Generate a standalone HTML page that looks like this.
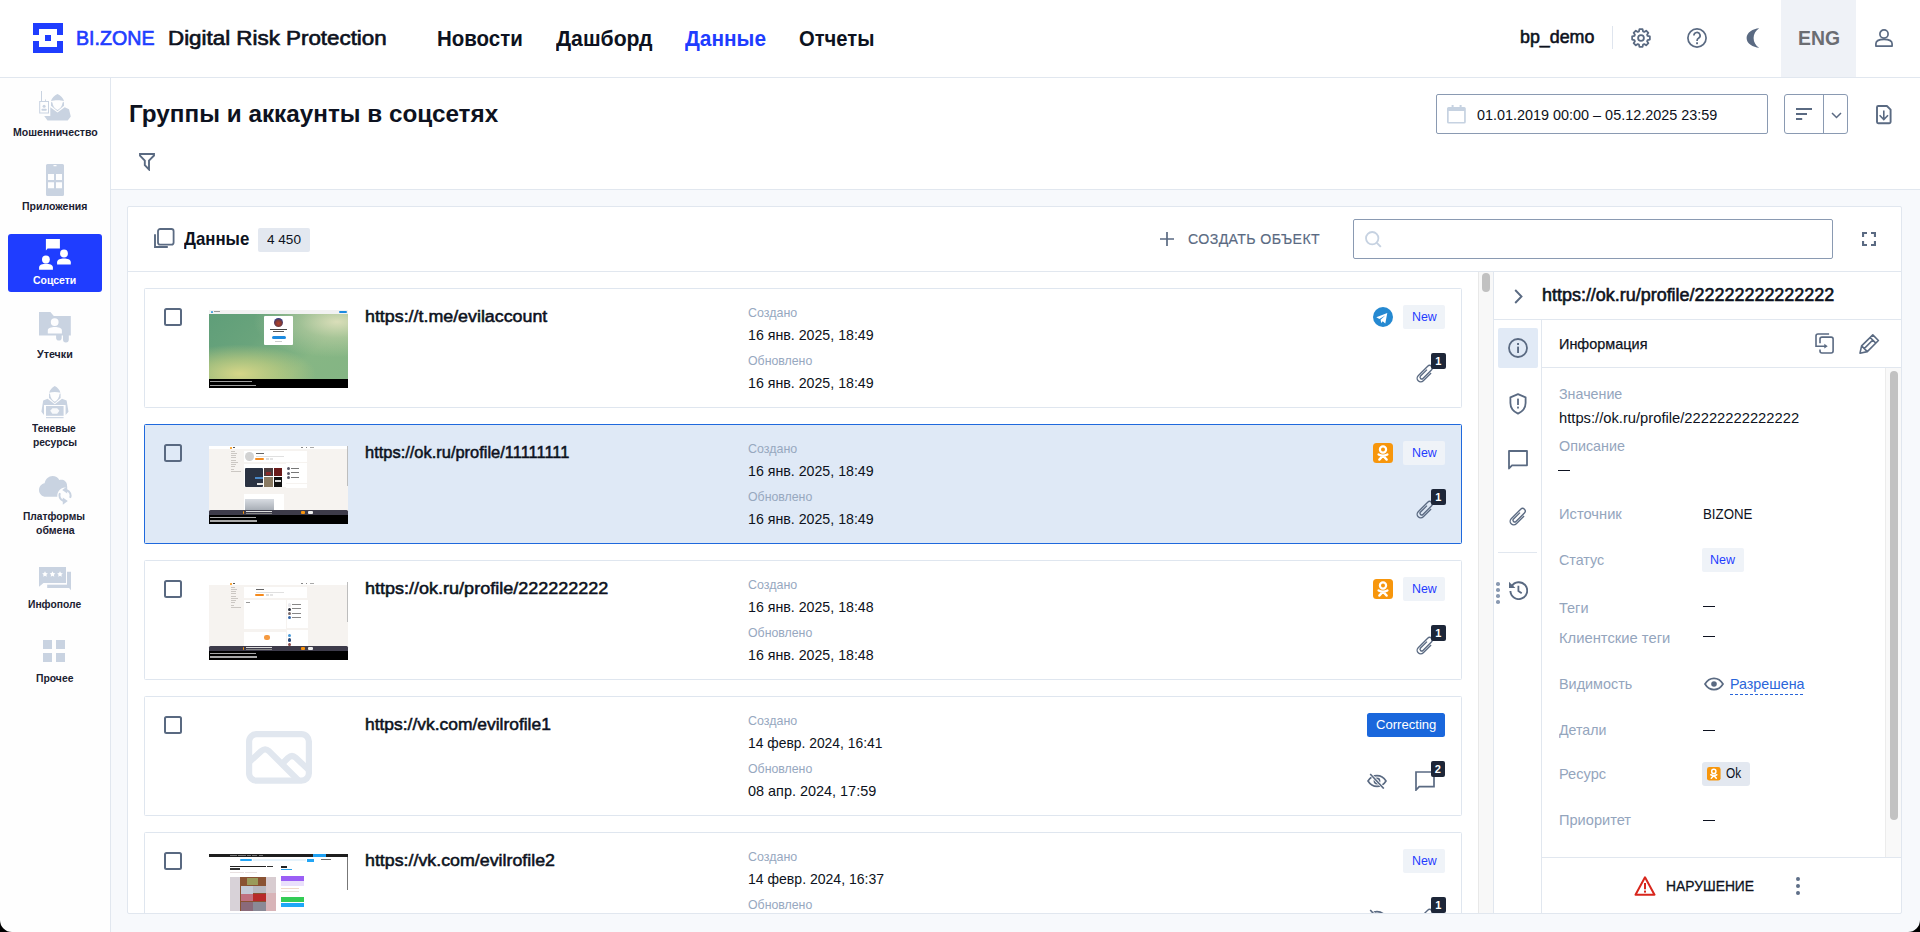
<!DOCTYPE html>
<html><head><meta charset="utf-8"><title>BI.ZONE DRP</title>
<style>
html,body{margin:0;padding:0;}
body{width:1920px;height:932px;overflow:hidden;position:relative;background:#fff;font-family:"Liberation Sans",sans-serif;}
.r{position:absolute;box-sizing:border-box;}
.t{position:absolute;white-space:nowrap;}
</style></head><body>
<div class="r" style="left:0px;top:0px;width:1920px;height:78px;background:#fff;border-bottom:1px solid #e1e7ef;"></div><svg class="r" style="left:33px;top:23px;" width="30" height="30" viewBox="0 0 30 30"><g fill="#1f3dff"><rect x="0" y="0" width="30" height="6"/><rect x="0" y="24" width="30" height="6"/><rect x="0" y="6" width="6" height="6"/><rect x="0" y="18" width="6" height="6"/><rect x="24" y="6" width="6" height="6"/><rect x="24" y="18" width="6" height="6"/><rect x="12" y="12" width="6" height="6"/></g></svg><div class="t" style="left:76.12px;top:27px;font-size:20.3px;line-height:22px;font-weight:400;color:#1f3dff;-webkit-text-stroke:0.65px #1f3dff;transform:scaleX(0.9674);transform-origin:0 0;">BI.ZONE</div><div class="t" style="left:167.92px;top:27px;font-size:19.9px;line-height:22px;font-weight:400;color:#0d1220;-webkit-text-stroke:0.64px #0d1220;transform:scaleX(1.1240);transform-origin:0 0;">Digital Risk Protection</div><div class="t" style="left:436.5px;top:26px;font-size:21.7px;line-height:25px;font-weight:700;color:#0d1220;transform:scaleX(0.9436);transform-origin:0 0;">Новости</div><div class="t" style="left:555.5px;top:26px;font-size:21.7px;line-height:25px;font-weight:700;color:#0d1220;transform:scaleX(0.9774);transform-origin:0 0;">Дашборд</div><div class="t" style="left:685.0px;top:26px;font-size:21.7px;line-height:25px;font-weight:700;color:#1f3dff;transform:scaleX(0.9608);transform-origin:0 0;">Данные</div><div class="t" style="left:799.0px;top:26px;font-size:21.7px;line-height:25px;font-weight:700;color:#0d1220;transform:scaleX(0.9315);transform-origin:0 0;">Отчеты</div><div class="t" style="left:1520.29px;top:27px;font-size:18.2px;line-height:20px;font-weight:400;color:#0d1220;-webkit-text-stroke:0.58px #0d1220;transform:scaleX(0.9806);transform-origin:0 0;">bp_demo</div><div class="r" style="left:1612px;top:26px;width:1px;height:23px;background:#dfe5ee;"></div><svg class="r" style="left:1631px;top:28px;" width="20" height="20" viewBox="0 0 20 20"><path fill="none" stroke="#5a6a82" stroke-width="1.8" stroke-linejoin="round" d="M7.98 3.40L8.44 1.14L11.56 1.14L12.02 3.40A6.9 6.9 0 0 1 13.24 3.91L15.16 2.63L17.37 4.84L16.09 6.76A6.9 6.9 0 0 1 16.60 7.98L18.86 8.44L18.86 11.56L16.60 12.02A6.9 6.9 0 0 1 16.09 13.24L17.37 15.16L15.16 17.37L13.24 16.09A6.9 6.9 0 0 1 12.02 16.60L11.56 18.86L8.44 18.86L7.98 16.60A6.9 6.9 0 0 1 6.76 16.09L4.84 17.37L2.63 15.16L3.91 13.24A6.9 6.9 0 0 1 3.40 12.02L1.14 11.56L1.14 8.44L3.40 7.98A6.9 6.9 0 0 1 3.91 6.76L2.63 4.84L4.84 2.63L6.76 3.91A6.9 6.9 0 0 1 7.98 3.40Z"/><circle cx="10" cy="10" r="2.9" fill="none" stroke="#5a6a82" stroke-width="1.8"/></svg><svg class="r" style="left:1687px;top:28px;" width="20" height="20" viewBox="0 0 20 20"><circle cx="10" cy="10" r="9.1" fill="none" stroke="#5a6a82" stroke-width="1.7"/><path d="M6.9 7.6a3.1 3.1 0 1 1 4.6 2.7c-.9.5-1.4 1.1-1.4 2.1v.6" fill="none" stroke="#5a6a82" stroke-width="1.7"/><rect x="9.1" y="14.3" width="1.9" height="1.9" fill="#5a6a82"/></svg><svg class="r" style="left:1746px;top:28px;" width="14" height="20" viewBox="0 0 14 20"><path fill="#5a6a82" d="M13.2 0.2C7 0.8 0.6 4.2 0.6 10s6.4 9.2 12.6 9.8C9.6 17.6 7.6 14 7.6 10S9.6 2.4 13.2 0.2z"/></svg><div class="r" style="left:1781px;top:0px;width:75px;height:77px;background:#eff2f7;"></div><div class="t" style="left:1797.6px;top:27px;font-size:19.9px;line-height:22px;font-weight:700;color:#6b6d72;transform:scaleX(0.9749);transform-origin:0 0;">ENG</div><svg class="r" style="left:1875px;top:29px;" width="18" height="18" viewBox="0 0 18 18"><circle cx="9" cy="5" r="4.1" fill="none" stroke="#5a6a82" stroke-width="1.7"/><path d="M0.9 17.1v-2.3c0-2.9 3.7-4.4 8.1-4.4s8.1 1.5 8.1 4.4v2.3z" fill="none" stroke="#5a6a82" stroke-width="1.7" stroke-linejoin="round"/></svg><div class="r" style="left:0px;top:78px;width:111px;height:854px;background:#fefefe;border-right:1px solid #e1e7ef;"></div><svg class="r" style="left:38px;top:90px;" width="34" height="32" viewBox="0 0 34 32"><g fill="#c9d3e1"><rect x="3" y="1" width="1" height="10.5"/><path d="M1.2 11h9.8v12.6H1.2z M2.2 12v10.6h7.8V12z" fill-rule="evenodd"/><circle cx="6.1" cy="16.3" r="1.5"/><rect x="3.4" y="18.8" width="5.4" height="2" rx="1"/><path d="M7.5 9.2c.6.4.8 1 .3 2.6l-.9.3c.4-1 .4-1.6-.1-2z"/><path d="M13 11.3C13.5 8 16.5 5.5 19.5 4C22.5 5.5 25.5 8 26 11.3C24 10.6 22 10.3 19.5 10.3C17 10.3 15 10.6 13 11.3z"/><path d="M13 12V15.8L19.5 21.2L26 15.8V12L24.6 12.4C24.2 16 22.2 18.6 19.5 20C16.8 18.6 14.8 16 14.4 12.4z"/><path d="M12.3 17.2L19.5 22.4L26.7 17.2L31 19.2L32.8 26.5L29.7 30.6H9.5L6.2 26H12.3z"/></g></svg><div class="t" style="left:12.8px;top:127px;font-size:10.2px;line-height:11px;font-weight:700;color:#1b2131;transform:scaleX(1.0353);transform-origin:0 0;">Мошенничество</div><svg class="r" style="left:46px;top:164.3px;" width="18" height="32" viewBox="0 0 18 32"><path fill="#c9d3e1" fill-rule="evenodd" d="M1.5 0h15a1.5 1.5 0 0 1 1.5 1.5v29a1.5 1.5 0 0 1-1.5 1.5h-15A1.5 1.5 0 0 1 0 30.5v-29A1.5 1.5 0 0 1 1.5 0zM2 10h6v6H2z M10 10h6v6h-6z M2 18.3h6v6H2z M10 18.3h6v6h-6z M7.5 1h3v1.2h-3z"/></svg><div class="t" style="left:22.1px;top:201px;font-size:10.2px;line-height:11px;font-weight:700;color:#1b2131;transform:scaleX(1.0324);transform-origin:0 0;">Приложения</div><div class="r" style="left:8px;top:234px;width:94px;height:58px;background:#1f3dff;border-radius:3px;"></div><svg class="r" style="left:39px;top:239px;" width="33" height="32" viewBox="0 0 33 32"><g fill="#fff"><path d="M6.9 0h14v9.6H8.6L6.9 11.4z"/><circle cx="25" cy="14.5" r="3.9"/><path d="M18.1 25.6v-2.4c0-2.5 3.6-3.6 6.9-3.6s6.8 1.1 6.8 3.6v2.4z"/><circle cx="6.9" cy="20.5" r="3.9"/><path d="M0.1 30.8v-2.4c0-2.5 3.6-3.6 6.9-3.6s6.9 1.1 6.9 3.6v2.4z"/></g></svg><div class="t" style="left:33.1px;top:275px;font-size:10.2px;line-height:11px;font-weight:700;color:#fff;transform:scaleX(1.0254);transform-origin:0 0;">Соцсети</div><svg class="r" style="left:39px;top:312.3px;" width="32" height="31" viewBox="0 0 32 31"><path fill="#c9d3e1" d="M0 0h11.4l3.4 3.9h17V23.4H0z"/><circle cx="15.7" cy="10.1" r="3.9" fill="#fdfdfe"/><path fill="#fdfdfe" d="M8.8 21.5h14.1v-3c0-2.4-3.6-3.4-7.05-3.4s-7.05 1-7.05 3.4z"/><path fill="#c9d3e1" d="M17.1 23h5.6v2.8a2.8 2.8 0 0 1-5.6 0z M24 23h5.8v4.6a2.9 2.9 0 0 1-5.8 0z"/></svg><div class="t" style="left:36.8px;top:349px;font-size:10.2px;line-height:11px;font-weight:700;color:#1b2131;transform:scaleX(1.0508);transform-origin:0 0;">Утечки</div><svg class="r" style="left:41px;top:386px;" width="29" height="33" viewBox="0 0 29 33"><g fill="#c9d3e1"><path d="M8.2 6.8C8.7 4 11 1.6 13.8 0C16.6 1.6 18.9 4 19.4 6.8C17.8 6.3 15.9 6 13.8 6C11.7 6 9.8 6.3 8.2 6.8z"/><path d="M8 7.4V12L13.8 17.2L19.6 12V7.4L18.6 7.7C18.2 11.4 16.4 14.4 13.8 15.8C11.2 14.4 9.4 11.4 9 7.7z"/><path d="M6.6 12.8L13.8 18.2L21 12.8L25.6 14.6L27.5 25.8L24.6 29V19.1H3V29L0.4 25.8L2.2 14.6z"/><rect x="5" y="20" width="17.6" height="9.8"/><rect x="5" y="31.1" width="17.6" height="1.1"/></g><path fill="#fdfdfe" d="M11.4 22.2h4.8l2.2 2.6-2.2 3h-4.8l-2.2-3z" opacity=".9"/></svg><div class="t" style="left:31.8px;top:423px;font-size:10.2px;line-height:11px;font-weight:700;color:#1b2131;transform:scaleX(0.9986);transform-origin:0 0;">Теневые</div><div class="t" style="left:33.1px;top:437px;font-size:10.2px;line-height:11px;font-weight:700;color:#1b2131;transform:scaleX(1.0091);transform-origin:0 0;">ресурсы</div><svg class="r" style="left:39px;top:476px;" width="34" height="31" viewBox="0 0 34 31"><path fill="#c9d3e1" d="M7 20.8C3 20.8 0 17.8 0 14C0 10.5 2.5 7.8 5.6 7.2C6.5 3 9.8 0 13.5 0C16.5 0 19 1.6 20.3 4C21 3.8 21.6 3.7 22.3 3.7C25.3 3.7 27.7 5.8 28 8.8L28 11.6A8.3 8.3 0 0 0 18.3 20.8Z"/><path fill="none" stroke="#c9d3e1" stroke-width="2" d="M27.92 14.24A5.6 5.6 0 0 1 31.08 21.87 M24.08 24.76A5.6 5.6 0 0 1 20.92 17.13"/><path fill="#c9d3e1" d="M23.2 13.9L28.2 10.2V17.6z M28.8 25.1L23.8 28.8V21.4z"/></svg><div class="t" style="left:22.7px;top:511px;font-size:10.2px;line-height:11px;font-weight:700;color:#1b2131;transform:scaleX(1.0022);transform-origin:0 0;">Платформы</div><div class="t" style="left:35.5px;top:525px;font-size:10.2px;line-height:11px;font-weight:700;color:#1b2131;transform:scaleX(1.0337);transform-origin:0 0;">обмена</div><svg class="r" style="left:39px;top:567px;" width="32" height="24" viewBox="0 0 32 24"><path fill="#c9d3e1" d="M8.2 4.7H32v18.6l-1.9-2.3H8.2z"/><path fill="#fdfdfe" d="M6.5 3.2h21.5v14.5H6.5z"/><path fill="#c9d3e1" d="M0 0h27v16.1H4.5L0 19.8z"/><g fill="#fff"><path d="M6 4.2l.9 1.9 2 .3-1.5 1.4.4 2-1.8-1-1.8 1 .4-2-1.5-1.4 2-.3z"/><path d="M13.5 4.2l.9 1.9 2 .3-1.5 1.4.4 2-1.8-1-1.8 1 .4-2-1.5-1.4 2-.3z"/><path d="M21 4.2l.9 1.9 2 .3-1.5 1.4.4 2-1.8-1-1.8 1 .4-2-1.5-1.4 2-.3z"/></g></svg><div class="t" style="left:28.4px;top:599px;font-size:10.2px;line-height:11px;font-weight:700;color:#1b2131;transform:scaleX(1.0098);transform-origin:0 0;">Инфополе</div><svg class="r" style="left:43.2px;top:640.2px;" width="22" height="22" viewBox="0 0 22 22"><g fill="#c9d3e1"><rect x="0" y="0" width="9" height="9"/><rect x="13" y="0" width="9" height="9"/><rect x="0" y="13" width="9" height="9"/><rect x="13" y="13" width="9" height="9"/></g></svg><div class="t" style="left:36.0px;top:673px;font-size:10.2px;line-height:11px;font-weight:700;color:#1b2131;transform:scaleX(1.0184);transform-origin:0 0;">Прочее</div><div class="r" style="left:111px;top:78px;width:1809px;height:112px;background:#fff;border-bottom:1px solid #e1e7ef;"></div><div class="t" style="left:128.9px;top:101px;font-size:23.5px;line-height:26px;font-weight:700;color:#0d1220;transform:scaleX(1.0336);transform-origin:0 0;">Группы и аккаунты в соцсетях</div><svg class="r" style="left:139px;top:153px;" width="16" height="18" viewBox="0 0 16 18"><path fill="none" stroke="#5a6a82" stroke-width="1.9" stroke-linejoin="miter" d="M1 1h14v1.5L10 7.6v8.9L5.8 12.2V7.6L1 2.7z"/></svg><div class="r" style="left:1436px;top:94px;width:332px;height:40px;border:1px solid #8a9ab2;border-radius:2px;background:#fff;"></div><svg class="r" style="left:1447px;top:105px;" width="19" height="19" viewBox="0 0 19 19"><g fill="#c6d2e1"><rect x="4.6" y="0" width="2" height="2.6"/><rect x="12.6" y="0" width="2" height="2.6"/><path fill-rule="evenodd" d="M1.6 2h15.6a1.6 1.6 0 0 1 1.6 1.6v13.4a1.6 1.6 0 0 1-1.6 1.6H1.6A1.6 1.6 0 0 1 0 17V3.6A1.6 1.6 0 0 1 1.6 2zM1.7 5.9v11h15.4v-11z"/></g></svg><div class="t" style="left:1477.0px;top:107px;font-size:14.2px;line-height:16px;font-weight:400;color:#0d1220;transform:scaleX(1.0150);transform-origin:0 0;">01.01.2019 00:00 – 05.12.2025 23:59</div><div class="r" style="left:1784px;top:94px;width:64px;height:40px;border:1px solid #8a9ab2;border-radius:3px;background:#fff;"></div><div class="r" style="left:1823px;top:95px;width:1px;height:38px;background:#8a9ab2;"></div><svg class="r" style="left:1796px;top:108px;" width="16" height="12" viewBox="0 0 16 12"><g fill="#5a6a82"><rect x="0" y="0" width="16" height="2"/><rect x="0" y="5" width="11" height="2"/><rect x="0" y="10" width="6.2" height="2"/></g></svg><svg class="r" style="left:1831px;top:112px;" width="11" height="7" viewBox="0 0 11 7"><path d="M1 1l4.5 4.5L10 1" fill="none" stroke="#5a6a82" stroke-width="1.5"/></svg><svg class="r" style="left:1876px;top:104.5px;" width="16" height="20" viewBox="0 0 16 20"><path d="M2.2 1h8.7l3.7 3.7V17a1.2 1.2 0 0 1-1.2 1.2H2.2A1.2 1.2 0 0 1 1 17V2.2A1.2 1.2 0 0 1 2.2 1z" fill="none" stroke="#5a6a82" stroke-width="1.9" stroke-linejoin="round"/><path d="M7.8 5.6v9 M3.6 10.2l4.2 4.3 4.2-4.3" fill="none" stroke="#5a6a82" stroke-width="1.6"/></svg><div class="r" style="left:111px;top:190px;width:1809px;height:742px;background:#f7f9fc;"></div><div class="r" style="left:127px;top:206px;width:1775px;height:708px;background:#fff;border:1px solid #e1e7ef;border-radius:2px;"></div><div class="r" style="left:128px;top:271px;width:1773px;height:1px;background:#e1e7ef;"></div><svg class="r" style="left:154px;top:228.2px;" width="21" height="21" viewBox="0 0 21 21"><rect x="4" y="1" width="15.6" height="15.6" rx="2.2" fill="none" stroke="#5a6a82" stroke-width="1.8"/><path d="M1 6.2V19H13.8" fill="none" stroke="#5a6a82" stroke-width="1.9"/></svg><div class="t" style="left:184.0px;top:229px;font-size:17.9px;line-height:20px;font-weight:700;color:#0d1220;transform:scaleX(0.9390);transform-origin:0 0;">Данные</div><div class="r" style="left:258px;top:228.3px;width:52px;height:23.4px;background:#e3e8f0;border-radius:2px;"></div><div class="t" style="left:267.0px;top:232px;font-size:13.4px;line-height:15px;font-weight:400;color:#0d1220;transform:scaleX(1.0129);transform-origin:0 0;">4 450</div><svg class="r" style="left:1160px;top:232px;" width="14" height="14" viewBox="0 0 14 14"><path d="M7 0v14 M0 7h14" stroke="#5a6a82" stroke-width="1.7"/></svg><div class="t" style="left:1188.0px;top:231px;font-size:14.2px;line-height:16px;font-weight:400;color:#5a6a82;letter-spacing:0.368px;-webkit-text-stroke:0.15px #5a6a82;">СОЗДАТЬ ОБЪЕКТ</div><div class="r" style="left:1353px;top:219px;width:480px;height:40px;border:1px solid #8a9ab2;border-radius:2px;background:#fff;"></div><svg class="r" style="left:1365px;top:231px;" width="17" height="17" viewBox="0 0 17 17"><circle cx="7.2" cy="7.2" r="6.2" fill="none" stroke="#c6d2e1" stroke-width="1.8"/><path d="M11.8 11.8l4 4" stroke="#c6d2e1" stroke-width="1.9"/></svg><svg class="r" style="left:1862px;top:232px;" width="14" height="14" viewBox="0 0 14 14"><path d="M1 5V1h4 M9 1h4v4 M13 9v4H9 M5 13H1V9" fill="none" stroke="#5a6a82" stroke-width="2.2"/></svg><div class="r" style="left:128px;top:272px;width:1350px;height:641px;overflow:hidden;"><div class="r" style="left:-128px;top:-272px;width:1920px;height:932px;"><div class="r" style="left:144px;top:288px;width:1318px;height:120px;background:#fff;border:1px solid #dfe6ef;border-radius:1.5px;"></div><div class="r" style="left:164px;top:308px;width:18px;height:18px;border:2px solid #596981;border-radius:2.5px;"></div><div class="r" style="left:209px;top:310px;width:139px;height:78px;background:#f2f2f2;overflow:hidden;"></div><div class="r" style="left:209px;top:314px;width:139px;height:65px;background:linear-gradient(135deg,#5f9e79 0%,#6aa47c 35%,#86b684 70%,#84b584 100%);"></div><div class="r" style="left:209px;top:314px;width:139px;height:65px;background:radial-gradient(ellipse 60% 55% at 92% 12%,rgba(222,224,188,0.95) 0%,rgba(200,212,170,0.5) 45%,rgba(200,210,170,0) 100%),radial-gradient(ellipse 55% 45% at 22% 92%,rgba(214,214,136,1) 0%,rgba(204,210,128,0.6) 50%,rgba(200,210,120,0) 100%);"></div><div class="r" style="left:264px;top:316px;width:29px;height:28.5px;background:#fff;border-radius:1px;"></div><div class="r" style="left:274px;top:318.2px;width:9px;height:9px;background:radial-gradient(circle at 50% 60%,#b8402a 0%,#7a3a3a 45%,#2a3a8a 75%);border-radius:50%;"></div><div class="r" style="left:270px;top:329.2px;width:17px;height:1.2px;background:#444;"></div><div class="r" style="left:273px;top:331px;width:11px;height:1.1px;background:#555;"></div><div class="r" style="left:272px;top:336px;width:13.5px;height:3px;background:#1d8be0;border-radius:2px;"></div><div class="r" style="left:275px;top:341px;width:7px;height:0.7px;background:#ccc;"></div><div class="r" style="left:209px;top:379px;width:139px;height:9px;background:#000;"></div><div class="r" style="left:210.2px;top:381px;width:42px;height:1.3px;background:#a0a0a0;"></div><div class="r" style="left:210.2px;top:384.8px;width:46px;height:1.3px;background:#a0a0a0;"></div><div class="r" style="left:338.5px;top:311px;width:8.5px;height:2px;background:#1d8be0;border-radius:1px;"></div><div class="r" style="left:210.5px;top:310.8px;width:2.5px;height:2.2px;background:#3a9ad8;border-radius:50%;"></div><div class="r" style="left:214px;top:311.4px;width:6px;height:1px;background:#999;"></div><div class="t" style="left:364.87px;top:307px;font-size:17px;line-height:19px;font-weight:400;color:#0d1220;-webkit-text-stroke:0.54px #0d1220;transform:scaleX(1.0485);transform-origin:0 0;">https://t.me/evilaccount</div><div class="t" style="left:747.9px;top:305px;font-size:13.1px;line-height:15px;font-weight:400;color:#97a8bf;transform:scaleX(0.9508);transform-origin:0 0;">Создано</div><div class="t" style="left:747.9px;top:327px;font-size:14.3px;line-height:16px;font-weight:400;color:#0d1220;transform:scaleX(0.9927);transform-origin:0 0;">16 янв. 2025, 18:49</div><div class="t" style="left:747.9px;top:353px;font-size:13.1px;line-height:15px;font-weight:400;color:#97a8bf;transform:scaleX(0.9412);transform-origin:0 0;">Обновлено</div><div class="t" style="left:747.9px;top:375px;font-size:14.3px;line-height:16px;font-weight:400;color:#0d1220;transform:scaleX(0.9927);transform-origin:0 0;">16 янв. 2025, 18:49</div><svg class="r" style="left:1373px;top:307px;" width="20" height="20" viewBox="0 0 20 20"><circle cx="10" cy="10" r="10" fill="#2589d1"/><path fill="#fff" d="M3.3 10.2l11-4.3-2 10.7-2.6-2.3-1.5 1.8-.6-3.3 4.6-4.3-5.8 3.6z"/></svg><div class="r" style="left:1403px;top:305px;width:42px;height:23.5px;background:#eff3f8;border-radius:2px;"></div><div class="t" style="left:1412.2px;top:309px;font-size:12.9px;line-height:15px;font-weight:400;color:#1f3cff;transform:scaleX(0.9588);transform-origin:0 0;">New</div><svg class="r" style="left:1412.5px;top:361.5px;" width="24" height="24" viewBox="0 0 24 24"><g transform="rotate(45 12 12)"><path fill="none" stroke="#5a6a82" stroke-width="1.35" d="M15.6 7V18a3.6 3.6 0 0 1-7.2 0V4.6a2.65 2.65 0 0 1 5.3 0V16.6a1.7 1.7 0 0 1-3.4 0V7.5"/></g></svg><div class="r" style="left:1431px;top:353px;width:14.5px;height:15.8px;background:#1d2638;border-radius:2px;"></div><div class="t" style="left:1431px;width:14.5px;text-align:center;top:355px;font-size:11px;line-height:12px;font-weight:700;color:#fff;">1</div><div class="r" style="left:144px;top:424px;width:1318px;height:120px;background:#dfe9f6;border:1px solid #1f69dd;border-radius:1.5px;"></div><div class="r" style="left:164px;top:444px;width:18px;height:18px;border:2px solid #596981;border-radius:2.5px;"></div><div class="r" style="left:209px;top:446px;width:139px;height:78px;background:#f6f3f0;overflow:hidden;"></div><div class="r" style="left:209px;top:446px;width:139px;height:3.2px;background:#fff;"></div><div class="r" style="left:230.3px;top:446.6px;width:2.2px;height:2.4px;background:#f7930e;border-radius:50%;"></div><div class="r" style="left:232.8px;top:447.2px;width:1.8px;height:1.2px;background:#555;"></div><div class="r" style="left:301px;top:447.2px;width:2px;height:1px;background:#888;"></div><div class="r" style="left:305.5px;top:447.2px;width:1.5px;height:1px;background:#888;"></div><div class="r" style="left:310px;top:447.2px;width:4px;height:1px;background:#aaa;"></div><div class="r" style="left:230.8px;top:451.3px;width:4.5px;height:0.8px;background:#cbc7c3;"></div><div class="r" style="left:230.8px;top:453.35px;width:6px;height:0.8px;background:#cbc7c3;"></div><div class="r" style="left:230.8px;top:455.4px;width:5px;height:0.8px;background:#cbc7c3;"></div><div class="r" style="left:230.8px;top:457.45px;width:5px;height:0.8px;background:#cbc7c3;"></div><div class="r" style="left:230.8px;top:459.5px;width:5px;height:0.8px;background:#cbc7c3;"></div><div class="r" style="left:230.8px;top:461.55px;width:7.5px;height:0.8px;background:#cbc7c3;"></div><div class="r" style="left:230.8px;top:463.6px;width:5.5px;height:0.8px;background:#cbc7c3;"></div><div class="r" style="left:230.8px;top:465.65px;width:4px;height:0.8px;background:#cbc7c3;"></div><div class="r" style="left:230.8px;top:468.9px;width:3.5px;height:0.8px;background:#cbc7c3;"></div><div class="r" style="left:230.8px;top:470.95px;width:10px;height:0.8px;background:#cbc7c3;"></div><div class="r" style="left:244.3px;top:451px;width:63px;height:11px;background:#fff;"></div><div class="r" style="left:245.2px;top:451.6px;width:9px;height:9.2px;background:#d2d2d2;border-radius:50%;"></div><div class="r" style="left:256px;top:453.3px;width:8px;height:1.1px;background:#666;"></div><div class="r" style="left:256px;top:455.6px;width:28px;height:1.2px;background:#e0e0e0;"></div><div class="r" style="left:255.1px;top:457.7px;width:9.1px;height:2.5px;background:#f58a1c;border-radius:1px;"></div><div class="r" style="left:265.5px;top:458.2px;width:3.2px;height:1.5px;background:#ddd;"></div><div class="r" style="left:270px;top:458.2px;width:2.5px;height:1.5px;background:#e5e5e5;"></div><div class="r" style="left:245.5px;top:465px;width:3px;height:0.9px;background:#bbb;"></div><div class="r" style="left:250.5px;top:465px;width:3px;height:0.9px;background:#bbb;"></div><div class="r" style="left:244.3px;top:463.5px;width:41.5px;height:23px;background:#fff;"></div><div class="r" style="left:245px;top:468px;width:18.4px;height:18.5px;background:#2a3242;border-radius:1px;"></div><div class="r" style="left:254.5px;top:476.5px;width:8px;height:2px;background:#4a88c8;"></div><div class="r" style="left:257px;top:482.5px;width:6px;height:2px;background:#e8e8e8;"></div><div class="r" style="left:264.3px;top:468px;width:8.4px;height:8px;background:#4a3a3c;"></div><div class="r" style="left:266px;top:472px;width:5px;height:3px;background:#8a2a2a;"></div><div class="r" style="left:264.3px;top:477px;width:8.4px;height:9.5px;background:#8a7a62;"></div><div class="r" style="left:273.7px;top:468px;width:8px;height:8px;background:#6a1a1a;"></div><div class="r" style="left:273.7px;top:477px;width:8px;height:9.5px;background:#111;"></div><div class="r" style="left:274.5px;top:480px;width:6.5px;height:2px;background:#ddd;"></div><div class="r" style="left:244.3px;top:494px;width:40px;height:15.8px;background:#fff;"></div><div class="r" style="left:245.2px;top:499.2px;width:28.8px;height:10.6px;background:linear-gradient(#d8dce2,#a8aeb6);"></div><div class="r" style="left:286px;top:463px;width:21.2px;height:19.8px;background:#fff;"></div><div class="r" style="left:286.8px;top:467.2px;width:3.2px;height:3.3px;background:#5a5a6a;border-radius:50%;"></div><div class="r" style="left:291.2px;top:467.8px;width:8px;height:1px;background:#777;"></div><div class="r" style="left:286.8px;top:471.7px;width:3.2px;height:3.3px;background:#5a5a6a;border-radius:50%;"></div><div class="r" style="left:291.2px;top:472.3px;width:8px;height:1px;background:#777;"></div><div class="r" style="left:286.8px;top:476.2px;width:3.2px;height:3.3px;background:#5a5a6a;border-radius:50%;"></div><div class="r" style="left:291.2px;top:476.8px;width:8px;height:1px;background:#777;"></div><div class="r" style="left:286px;top:484px;width:21.2px;height:3.5px;background:#fff;"></div><div class="r" style="left:209px;top:509.8px;width:139px;height:5.6px;background:#3d3b4a;border-radius:1.5px 1.5px 0 0;"></div><div class="r" style="left:242.6px;top:511px;width:1.6px;height:2.5px;background:#f7930e;border-radius:50%;"></div><div class="r" style="left:246px;top:511.2px;width:26px;height:0.9px;background:#ddd;"></div><div class="r" style="left:246px;top:512.8px;width:26px;height:0.7px;background:#888;"></div><div class="r" style="left:301.4px;top:511px;width:3.8px;height:2.5px;background:#f7930e;border-radius:1px;"></div><div class="r" style="left:307.5px;top:511px;width:5px;height:2.5px;background:#eee;border-radius:1px;"></div><div class="r" style="left:209px;top:515.2px;width:139px;height:8.8px;background:#000;"></div><div class="r" style="left:210.2px;top:516.6px;width:46px;height:1.4px;background:#a8a8a8;"></div><div class="r" style="left:210.2px;top:520.4px;width:47px;height:1.4px;background:#a8a8a8;"></div><div class="r" style="left:346.6px;top:446px;width:1.4px;height:40px;background:#bdbdbd;"></div><div class="t" style="left:364.87px;top:443px;font-size:17px;line-height:19px;font-weight:400;color:#0d1220;-webkit-text-stroke:0.54px #0d1220;transform:scaleX(0.9672);transform-origin:0 0;">https://ok.ru/profile/11111111</div><div class="t" style="left:747.9px;top:441px;font-size:13.1px;line-height:15px;font-weight:400;color:#97a8bf;transform:scaleX(0.9508);transform-origin:0 0;">Создано</div><div class="t" style="left:747.9px;top:463px;font-size:14.3px;line-height:16px;font-weight:400;color:#0d1220;transform:scaleX(0.9927);transform-origin:0 0;">16 янв. 2025, 18:49</div><div class="t" style="left:747.9px;top:489px;font-size:13.1px;line-height:15px;font-weight:400;color:#97a8bf;transform:scaleX(0.9412);transform-origin:0 0;">Обновлено</div><div class="t" style="left:747.9px;top:511px;font-size:14.3px;line-height:16px;font-weight:400;color:#0d1220;transform:scaleX(0.9927);transform-origin:0 0;">16 янв. 2025, 18:49</div><svg class="r" style="left:1373px;top:443px;" width="20" height="20" viewBox="0 0 20 20"><rect x="0" y="0" width="20" height="20" rx="3.5" fill="#f7960c"/><circle cx="10" cy="6.5" r="3.1" fill="none" stroke="#fff" stroke-width="2.2"/><path d="M5.6 11.4c2.8 1.6 6 1.6 8.8 0 M10 12.6l-3.7 4 M10 12.6l3.7 4" fill="none" stroke="#fff" stroke-width="2.3" stroke-linecap="round"/></svg><div class="r" style="left:1403px;top:441px;width:42px;height:23.5px;background:#eff3f8;border-radius:2px;"></div><div class="t" style="left:1412.2px;top:445px;font-size:12.9px;line-height:15px;font-weight:400;color:#1f3cff;transform:scaleX(0.9588);transform-origin:0 0;">New</div><svg class="r" style="left:1412.5px;top:497.5px;" width="24" height="24" viewBox="0 0 24 24"><g transform="rotate(45 12 12)"><path fill="none" stroke="#5a6a82" stroke-width="1.35" d="M15.6 7V18a3.6 3.6 0 0 1-7.2 0V4.6a2.65 2.65 0 0 1 5.3 0V16.6a1.7 1.7 0 0 1-3.4 0V7.5"/></g></svg><div class="r" style="left:1431px;top:489px;width:14.5px;height:15.8px;background:#1d2638;border-radius:2px;"></div><div class="t" style="left:1431px;width:14.5px;text-align:center;top:491px;font-size:11px;line-height:12px;font-weight:700;color:#fff;">1</div><div class="r" style="left:144px;top:560px;width:1318px;height:120px;background:#fff;border:1px solid #dfe6ef;border-radius:1.5px;"></div><div class="r" style="left:164px;top:580px;width:18px;height:18px;border:2px solid #596981;border-radius:2.5px;"></div><div class="r" style="left:209px;top:582px;width:139px;height:78px;background:#f6f3f0;overflow:hidden;"></div><div class="r" style="left:209px;top:582px;width:139px;height:3.2px;background:#fff;"></div><div class="r" style="left:230.3px;top:582.6px;width:2.2px;height:2.4px;background:#f7930e;border-radius:50%;"></div><div class="r" style="left:232.8px;top:583.2px;width:1.8px;height:1.2px;background:#555;"></div><div class="r" style="left:301px;top:583.2px;width:2px;height:1px;background:#888;"></div><div class="r" style="left:305.5px;top:583.2px;width:1.5px;height:1px;background:#888;"></div><div class="r" style="left:310px;top:583.2px;width:4px;height:1px;background:#aaa;"></div><div class="r" style="left:230.8px;top:587.3px;width:4.5px;height:0.8px;background:#cbc7c3;"></div><div class="r" style="left:230.8px;top:589.35px;width:6px;height:0.8px;background:#cbc7c3;"></div><div class="r" style="left:230.8px;top:591.4px;width:5px;height:0.8px;background:#cbc7c3;"></div><div class="r" style="left:230.8px;top:593.45px;width:5px;height:0.8px;background:#cbc7c3;"></div><div class="r" style="left:230.8px;top:595.5px;width:5px;height:0.8px;background:#cbc7c3;"></div><div class="r" style="left:230.8px;top:597.55px;width:7.5px;height:0.8px;background:#cbc7c3;"></div><div class="r" style="left:230.8px;top:599.6px;width:5.5px;height:0.8px;background:#cbc7c3;"></div><div class="r" style="left:230.8px;top:601.65px;width:4px;height:0.8px;background:#cbc7c3;"></div><div class="r" style="left:230.8px;top:604.9px;width:3.5px;height:0.8px;background:#cbc7c3;"></div><div class="r" style="left:230.8px;top:606.95px;width:10px;height:0.8px;background:#cbc7c3;"></div><div class="r" style="left:244.3px;top:587px;width:63px;height:11px;background:#fff;"></div><div class="r" style="left:256px;top:589.3px;width:8px;height:1.1px;background:#666;"></div><div class="r" style="left:256px;top:591.6px;width:28px;height:1.2px;background:#e0e0e0;"></div><div class="r" style="left:255.1px;top:593.7px;width:9.1px;height:2.5px;background:#f58a1c;border-radius:1px;"></div><div class="r" style="left:265.5px;top:594.2px;width:3.2px;height:1.5px;background:#ddd;"></div><div class="r" style="left:270px;top:594.2px;width:2.5px;height:1.5px;background:#e5e5e5;"></div><div class="r" style="left:245.5px;top:601px;width:3px;height:0.9px;background:#bbb;"></div><div class="r" style="left:250.5px;top:601px;width:3px;height:0.9px;background:#bbb;"></div><div class="r" style="left:244.3px;top:599.5px;width:42px;height:29px;background:#fff;"></div><div class="r" style="left:245.5px;top:601.5px;width:4px;height:0.9px;background:#999;"></div><div class="r" style="left:244.3px;top:632px;width:42px;height:14px;background:#fff;"></div><div class="r" style="left:264px;top:635px;width:5.5px;height:5px;background:#f59a40;border-radius:40%;"></div><div class="r" style="left:286.8px;top:599.5px;width:21px;height:28.5px;background:#fff;"></div><div class="r" style="left:287.5px;top:603.3px;width:3.2px;height:3.3px;background:#e8e8ec;border-radius:50%;"></div><div class="r" style="left:292px;top:604.0px;width:9px;height:1px;background:#888;"></div><div class="r" style="left:287.5px;top:607.5999999999999px;width:3.2px;height:3.3px;background:#2a2e3a;border-radius:50%;"></div><div class="r" style="left:292px;top:608.3px;width:9px;height:1px;background:#888;"></div><div class="r" style="left:287.5px;top:611.9px;width:3.2px;height:3.3px;background:#7a6a6a;border-radius:50%;"></div><div class="r" style="left:292px;top:612.6px;width:9px;height:1px;background:#888;"></div><div class="r" style="left:287.5px;top:616.1999999999999px;width:3.2px;height:3.3px;background:#3a6aaa;border-radius:50%;"></div><div class="r" style="left:292px;top:616.9px;width:9px;height:1px;background:#888;"></div><div class="r" style="left:286.8px;top:629.5px;width:21px;height:17px;background:#fff;"></div><div class="r" style="left:287.5px;top:634.0px;width:3.2px;height:3.3px;background:#4a9ad8;border-radius:50%;"></div><div class="r" style="left:287.5px;top:638.3px;width:3.2px;height:3.3px;background:#2a4a7a;border-radius:50%;"></div><div class="r" style="left:287.5px;top:642.6px;width:3.2px;height:3.3px;background:#8a4a4a;border-radius:50%;"></div><div class="r" style="left:209px;top:645.8px;width:139px;height:5.6px;background:#3d3b4a;border-radius:1.5px 1.5px 0 0;"></div><div class="r" style="left:242.6px;top:647px;width:1.6px;height:2.5px;background:#f7930e;border-radius:50%;"></div><div class="r" style="left:246px;top:647.2px;width:26px;height:0.9px;background:#ddd;"></div><div class="r" style="left:246px;top:648.8px;width:26px;height:0.7px;background:#888;"></div><div class="r" style="left:301.4px;top:647px;width:3.8px;height:2.5px;background:#f7930e;border-radius:1px;"></div><div class="r" style="left:307.5px;top:647px;width:5px;height:2.5px;background:#eee;border-radius:1px;"></div><div class="r" style="left:209px;top:651.2px;width:139px;height:8.8px;background:#000;"></div><div class="r" style="left:210.2px;top:652.6px;width:46px;height:1.4px;background:#a8a8a8;"></div><div class="r" style="left:210.2px;top:656.4px;width:47px;height:1.4px;background:#a8a8a8;"></div><div class="r" style="left:346.6px;top:582px;width:1.4px;height:40px;background:#bdbdbd;"></div><div class="t" style="left:364.87px;top:579px;font-size:17px;line-height:19px;font-weight:400;color:#0d1220;-webkit-text-stroke:0.54px #0d1220;transform:scaleX(1.0596);transform-origin:0 0;">https://ok.ru/profile/222222222</div><div class="t" style="left:747.9px;top:577px;font-size:13.1px;line-height:15px;font-weight:400;color:#97a8bf;transform:scaleX(0.9508);transform-origin:0 0;">Создано</div><div class="t" style="left:747.9px;top:599px;font-size:14.3px;line-height:16px;font-weight:400;color:#0d1220;transform:scaleX(0.9927);transform-origin:0 0;">16 янв. 2025, 18:48</div><div class="t" style="left:747.9px;top:625px;font-size:13.1px;line-height:15px;font-weight:400;color:#97a8bf;transform:scaleX(0.9412);transform-origin:0 0;">Обновлено</div><div class="t" style="left:747.9px;top:647px;font-size:14.3px;line-height:16px;font-weight:400;color:#0d1220;transform:scaleX(0.9927);transform-origin:0 0;">16 янв. 2025, 18:48</div><svg class="r" style="left:1373px;top:579px;" width="20" height="20" viewBox="0 0 20 20"><rect x="0" y="0" width="20" height="20" rx="3.5" fill="#f7960c"/><circle cx="10" cy="6.5" r="3.1" fill="none" stroke="#fff" stroke-width="2.2"/><path d="M5.6 11.4c2.8 1.6 6 1.6 8.8 0 M10 12.6l-3.7 4 M10 12.6l3.7 4" fill="none" stroke="#fff" stroke-width="2.3" stroke-linecap="round"/></svg><div class="r" style="left:1403px;top:577px;width:42px;height:23.5px;background:#eff3f8;border-radius:2px;"></div><div class="t" style="left:1412.2px;top:581px;font-size:12.9px;line-height:15px;font-weight:400;color:#1f3cff;transform:scaleX(0.9588);transform-origin:0 0;">New</div><svg class="r" style="left:1412.5px;top:633.5px;" width="24" height="24" viewBox="0 0 24 24"><g transform="rotate(45 12 12)"><path fill="none" stroke="#5a6a82" stroke-width="1.35" d="M15.6 7V18a3.6 3.6 0 0 1-7.2 0V4.6a2.65 2.65 0 0 1 5.3 0V16.6a1.7 1.7 0 0 1-3.4 0V7.5"/></g></svg><div class="r" style="left:1431px;top:625px;width:14.5px;height:15.8px;background:#1d2638;border-radius:2px;"></div><div class="t" style="left:1431px;width:14.5px;text-align:center;top:627px;font-size:11px;line-height:12px;font-weight:700;color:#fff;">1</div><div class="r" style="left:144px;top:696px;width:1318px;height:120px;background:#fff;border:1px solid #dfe6ef;border-radius:1.5px;"></div><div class="r" style="left:164px;top:716px;width:18px;height:18px;border:2px solid #596981;border-radius:2.5px;"></div><svg class="r" style="left:245.5px;top:730.5px;" width="66" height="53" viewBox="0 0 66 53"><defs><clipPath id="phc"><rect x="3.1" y="3.1" width="59.8" height="46.6" rx="6"/></clipPath></defs><g fill="none" stroke="#e1e7ef" stroke-width="6.2"><rect x="3.1" y="3.1" width="59.8" height="46.6" rx="7.5"/><g clip-path="url(#phc)"><g transform="translate(-1 2.5)"><path d="M1 31.5L16.2 17.6Q20.1 14.2 24 17.6L53 46.5" stroke-linejoin="round"/><path d="M35.2 32.2L43.2 24.3Q47 20.9 50.8 24.3L66 38.5" stroke-linejoin="round"/></g></g></g></svg><div class="t" style="left:364.87px;top:715px;font-size:17px;line-height:19px;font-weight:400;color:#0d1220;-webkit-text-stroke:0.54px #0d1220;transform:scaleX(1.0246);transform-origin:0 0;">https://vk.com/evilrofile1</div><div class="t" style="left:747.9px;top:713px;font-size:13.1px;line-height:15px;font-weight:400;color:#97a8bf;transform:scaleX(0.9508);transform-origin:0 0;">Создано</div><div class="t" style="left:747.9px;top:735px;font-size:14.3px;line-height:16px;font-weight:400;color:#0d1220;transform:scaleX(0.9701);transform-origin:0 0;">14 февр. 2024, 16:41</div><div class="t" style="left:747.9px;top:761px;font-size:13.1px;line-height:15px;font-weight:400;color:#97a8bf;transform:scaleX(0.9412);transform-origin:0 0;">Обновлено</div><div class="t" style="left:747.9px;top:783px;font-size:14.3px;line-height:16px;font-weight:400;color:#0d1220;transform:scaleX(1.0096);transform-origin:0 0;">08 апр. 2024, 17:59</div><div class="r" style="left:1367px;top:713px;width:78px;height:24px;background:#1a67dc;border-radius:2.5px;"></div><div class="t" style="left:1375.9px;top:717px;font-size:12.9px;line-height:15px;font-weight:400;color:#fff;transform:scaleX(1.0146);transform-origin:0 0;">Correcting</div><svg class="r" style="left:1367px;top:773px;" width="20" height="16" viewBox="0 0 20 16"><path d="M1 8c2.2-3.6 5.3-5.4 9-5.4s6.8 1.8 9 5.4c-2.2 3.6-5.3 5.4-9 5.4S3.2 11.6 1 8z" fill="none" stroke="#5a6a82" stroke-width="1.6"/><circle cx="10" cy="8" r="2.6" fill="none" stroke="#5a6a82" stroke-width="1.6"/><path d="M3.2 1l13.8 14.6" stroke="#fff" stroke-width="3"/><path d="M3.2 1l13.6 14.6" stroke="#5a6a82" stroke-width="1.6"/></svg><svg class="r" style="left:1415px;top:771px;" width="20" height="20" viewBox="0 0 20 20"><path d="M1 1h18v14.6H4.2L1 19z" fill="none" stroke="#5a6a82" stroke-width="1.7" stroke-linejoin="miter"/></svg><div class="r" style="left:1430.5px;top:761px;width:14.5px;height:15.8px;background:#1d2638;border-radius:2px;"></div><div class="t" style="left:1430.5px;width:14.5px;text-align:center;top:763px;font-size:11px;line-height:12px;font-weight:700;color:#fff;">2</div><div class="r" style="left:144px;top:832px;width:1318px;height:120px;background:#fff;border:1px solid #dfe6ef;border-radius:1.5px;"></div><div class="r" style="left:164px;top:852px;width:18px;height:18px;border:2px solid #596981;border-radius:2.5px;"></div><div class="r" style="left:209px;top:854px;width:139px;height:78px;background:#fff;overflow:hidden;"></div><div class="r" style="left:209px;top:854px;width:139px;height:3px;background:#1e1e1e;"></div><div class="r" style="left:230px;top:855.1px;width:7px;height:0.8px;background:#777;"></div><div class="r" style="left:238px;top:855.1px;width:8px;height:0.8px;background:#777;"></div><div class="r" style="left:247px;top:855.1px;width:4px;height:0.8px;background:#777;"></div><div class="r" style="left:252px;top:855.1px;width:5px;height:0.8px;background:#777;"></div><div class="r" style="left:259px;top:855.1px;width:4px;height:0.8px;background:#777;"></div><div class="r" style="left:313px;top:854.3px;width:13px;height:2.4px;background:#1fa1f2;"></div><div class="r" style="left:240px;top:858.8px;width:12px;height:2.6px;background:#22a5f5;border-radius:2px;"></div><div class="r" style="left:253px;top:859.4px;width:53px;height:1.4px;background:#e6f3fb;"></div><div class="r" style="left:306.5px;top:858.8px;width:7px;height:2.8px;background:#22a5f5;"></div><div class="r" style="left:230px;top:865.6px;width:36px;height:1.9px;background:#222;"></div><div class="r" style="left:230px;top:868px;width:10px;height:1.9px;background:#333;"></div><div class="r" style="left:267px;top:865.6px;width:6px;height:1.9px;background:#333;"></div><div class="r" style="left:280.5px;top:865.6px;width:6.5px;height:2.2px;background:#222;"></div><div class="r" style="left:281px;top:868.6px;width:11px;height:0.8px;background:#2aa0e8;"></div><div class="r" style="left:230px;top:871.6px;width:14px;height:1.4px;background:#e8e0e0;"></div><div class="r" style="left:245px;top:871.6px;width:12px;height:1.4px;background:#e8e0e0;"></div><div class="r" style="left:230px;top:877px;width:46px;height:34px;background:#d8d2d8;"></div><div class="r" style="left:240px;top:877px;width:26px;height:34px;background:#8a5232;"></div><div class="r" style="left:247px;top:878px;width:11px;height:7px;background:#9a9a5a;"></div><div class="r" style="left:240.5px;top:886px;width:12px;height:8px;background:#c4cad8;"></div><div class="r" style="left:253px;top:886px;width:12.5px;height:7px;background:#b8b8c0;"></div><div class="r" style="left:240.5px;top:894px;width:12px;height:7px;background:#c07080;"></div><div class="r" style="left:253px;top:894px;width:12.5px;height:7px;background:#b82a2a;"></div><div class="r" style="left:240.5px;top:902px;width:12px;height:8.5px;background:#8a6a7a;"></div><div class="r" style="left:253px;top:902px;width:12.5px;height:8.5px;background:#8a8a96;"></div><div class="r" style="left:266px;top:877px;width:10px;height:16px;background:#d8ccd0;"></div><div class="r" style="left:266px;top:893px;width:10px;height:18px;background:#d8b4b8;"></div><div class="r" style="left:280.5px;top:876px;width:23px;height:4.5px;background:#9b5ff5;"></div><div class="r" style="left:280.5px;top:881px;width:23px;height:4.6px;background:#eae0fc;"></div><div class="r" style="left:280.5px;top:887.5px;width:18px;height:0.8px;background:#f0d8c8;"></div><div class="r" style="left:280.5px;top:890.6px;width:18px;height:0.8px;background:#e8e0d8;"></div><div class="r" style="left:280.5px;top:897px;width:23px;height:4.8px;background:#33cc55;"></div><div class="r" style="left:280.5px;top:902.6px;width:23px;height:4.6px;background:#1ea7f7;"></div><div class="r" style="left:321px;top:858.8px;width:10px;height:1.2px;background:#666;"></div><div class="r" style="left:346.8px;top:857px;width:1.2px;height:33px;background:#777;"></div><div class="t" style="left:364.87px;top:851px;font-size:17px;line-height:19px;font-weight:400;color:#0d1220;-webkit-text-stroke:0.54px #0d1220;transform:scaleX(1.0472);transform-origin:0 0;">https://vk.com/evilrofile2</div><div class="t" style="left:747.9px;top:849px;font-size:13.1px;line-height:15px;font-weight:400;color:#97a8bf;transform:scaleX(0.9508);transform-origin:0 0;">Создано</div><div class="t" style="left:747.9px;top:871px;font-size:14.3px;line-height:16px;font-weight:400;color:#0d1220;transform:scaleX(0.9817);transform-origin:0 0;">14 февр. 2024, 16:37</div><div class="t" style="left:747.9px;top:897px;font-size:13.1px;line-height:15px;font-weight:400;color:#97a8bf;transform:scaleX(0.9412);transform-origin:0 0;">Обновлено</div><div class="r" style="left:1403px;top:849px;width:42px;height:23.5px;background:#eff3f8;border-radius:2px;"></div><div class="t" style="left:1412.2px;top:853px;font-size:12.9px;line-height:15px;font-weight:400;color:#1f3cff;transform:scaleX(0.9588);transform-origin:0 0;">New</div><svg class="r" style="left:1367px;top:909px;" width="20" height="16" viewBox="0 0 20 16"><path d="M1 8c2.2-3.6 5.3-5.4 9-5.4s6.8 1.8 9 5.4c-2.2 3.6-5.3 5.4-9 5.4S3.2 11.6 1 8z" fill="none" stroke="#5a6a82" stroke-width="1.6"/><circle cx="10" cy="8" r="2.6" fill="none" stroke="#5a6a82" stroke-width="1.6"/><path d="M3.2 1l13.8 14.6" stroke="#fff" stroke-width="3"/><path d="M3.2 1l13.6 14.6" stroke="#5a6a82" stroke-width="1.6"/></svg><svg class="r" style="left:1412.5px;top:905.5px;" width="24" height="24" viewBox="0 0 24 24"><g transform="rotate(45 12 12)"><path fill="none" stroke="#5a6a82" stroke-width="1.35" d="M15.6 7V18a3.6 3.6 0 0 1-7.2 0V4.6a2.65 2.65 0 0 1 5.3 0V16.6a1.7 1.7 0 0 1-3.4 0V7.5"/></g></svg><div class="r" style="left:1431px;top:897px;width:14.5px;height:15.8px;background:#1d2638;border-radius:2px;"></div><div class="t" style="left:1431px;width:14.5px;text-align:center;top:899px;font-size:11px;line-height:12px;font-weight:700;color:#fff;">1</div></div></div><div class="r" style="left:1478px;top:272px;width:15px;height:641px;background:#f8f8f8;border-left:1px solid #e8e8e8;"></div><div class="r" style="left:1482px;top:273px;width:8px;height:19px;background:#c1c1c1;border-radius:4px;"></div><div class="r" style="left:1493px;top:272px;width:1px;height:641px;background:#e1e7ef;"></div><div class="r" style="left:1494px;top:319px;width:407px;height:1px;background:#e1e7ef;"></div><svg class="r" style="left:1514px;top:289px;" width="9" height="15" viewBox="0 0 9 15"><path d="M1.2 1l6.3 6.5-6.3 6.5" fill="none" stroke="#5a6a82" stroke-width="1.9"/></svg><div class="t" style="left:1542.28px;top:285px;font-size:17.5px;line-height:20px;font-weight:400;color:#0d1220;-webkit-text-stroke:0.56px #0d1220;transform:scaleX(1.0251);transform-origin:0 0;">https://ok.ru/profile/22222222222222</div><div class="r" style="left:1541px;top:320px;width:1px;height:593px;background:#e1e7ef;"></div><div class="r" style="left:1498px;top:328px;width:40px;height:40px;background:#e1eaf6;border-radius:2px;"></div><svg class="r" style="left:1508px;top:338px;" width="20" height="20" viewBox="0 0 20 20"><circle cx="10" cy="10" r="9" fill="none" stroke="#5a6a82" stroke-width="1.8"/><rect x="9.1" y="8.6" width="1.9" height="6.4" fill="#5a6a82"/><rect x="9.1" y="5" width="1.9" height="2" fill="#5a6a82"/></svg><svg class="r" style="left:1509px;top:393px;" width="18" height="22" viewBox="0 0 18 22"><path d="M9 1.1l7.6 3.2v5.6c0 5-3.6 8.8-7.6 10.7C5 18.7 1.4 14.9 1.4 9.9V4.3z" fill="none" stroke="#5a6a82" stroke-width="1.8" stroke-linejoin="round"/><rect x="8.1" y="5.6" width="1.8" height="6.4" fill="#5a6a82"/><rect x="8.1" y="13.6" width="1.8" height="1.9" fill="#5a6a82"/></svg><svg class="r" style="left:1508.3px;top:450.2px;" width="20" height="20" viewBox="0 0 20 20"><path d="M1 1h18v14.3H4L1 18.5z" fill="none" stroke="#5a6a82" stroke-width="1.8" stroke-linejoin="round"/></svg><svg class="r" style="left:1506px;top:504.5px;" width="24" height="24" viewBox="0 0 24 24"><g transform="rotate(45 12 12)"><path fill="none" stroke="#5a6a82" stroke-width="1.35" d="M15.6 7V18a3.6 3.6 0 0 1-7.2 0V4.6a2.65 2.65 0 0 1 5.3 0V16.6a1.7 1.7 0 0 1-3.4 0V7.5"/></g></svg><div class="r" style="left:1498px;top:552px;width:39px;height:1px;background:#e1e7ef;"></div><svg class="r" style="left:1508px;top:580px;" width="20" height="20" viewBox="0 0 20 20"><path d="M3.6 6.3A8.4 8.4 0 1 1 2.4 11" fill="none" stroke="#5a6a82" stroke-width="1.9"/><path d="M1 1.7v6.4h6.4z" fill="#5a6a82"/><path d="M10.4 5.8v5.2l3.3 2.3" fill="none" stroke="#5a6a82" stroke-width="1.8"/></svg><div class="r" style="left:1496.2px;top:582.1px;width:3.6px;height:3.6px;background:#8a9ab2;border-radius:50%;"></div><div class="r" style="left:1496.2px;top:588.1px;width:3.6px;height:3.6px;background:#8a9ab2;border-radius:50%;"></div><div class="r" style="left:1496.2px;top:594.1px;width:3.6px;height:3.6px;background:#8a9ab2;border-radius:50%;"></div><div class="r" style="left:1496.2px;top:600.1px;width:3.6px;height:3.6px;background:#8a9ab2;border-radius:50%;"></div><div class="r" style="left:1542px;top:367px;width:359px;height:1px;background:#e1e7ef;"></div><div class="t" style="left:1558.7px;top:336px;font-size:14.8px;line-height:16px;font-weight:400;color:#0d1220;-webkit-text-stroke:0.25px #0d1220;transform:scaleX(0.9763);transform-origin:0 0;">Информация</div><svg class="r" style="left:1815px;top:333px;" width="20" height="22" viewBox="0 0 20 22"><path d="M14.1 1H3a2 2 0 0 0-2 2V13.2h10" fill="none" stroke="#5a6a82" stroke-width="1.6"/><path d="M9.3 10.8l3.4 2.4-3.4 2.4z" fill="#5a6a82"/><path d="M5 10.3V6.1a2 2 0 0 1 2-2h9.1a2 2 0 0 1 2 2V18a2 2 0 0 1-2 2H7a2 2 0 0 1-2-2v-1.5" fill="none" stroke="#5a6a82" stroke-width="1.6"/></svg><svg class="r" style="left:1859px;top:334px;" width="21" height="21" viewBox="0 0 21 21"><path d="M1 19.2l1.6-7.3L13.8 0.9l5.6 5.6L8.3 17.6z M2.6 11.9l5.7 5.7 M11.2 3.5l5.6 5.6 M5.2 14.6l8.6-8.6" fill="none" stroke="#5a6a82" stroke-width="1.6" stroke-linejoin="round"/></svg><div class="r" style="left:1885px;top:368px;width:16px;height:489px;background:#f9f9f9;border-left:1px solid #ececec;"></div><div class="r" style="left:1889.5px;top:371px;width:8px;height:449px;background:#c2c2c2;border-radius:4px;"></div><div class="t" style="left:1558.7px;top:386px;font-size:14.5px;line-height:16px;font-weight:400;color:#94a5bd;transform:scaleX(0.9843);transform-origin:0 0;">Значение</div><div class="t" style="left:1558.7px;top:410px;font-size:14.2px;line-height:16px;font-weight:400;color:#0d1220;transform:scaleX(1.0388);transform-origin:0 0;">https://ok.ru/profile/22222222222222</div><div class="t" style="left:1558.7px;top:438px;font-size:14.5px;line-height:16px;font-weight:400;color:#94a5bd;transform:scaleX(0.9880);transform-origin:0 0;">Описание</div><div class="r" style="left:1558px;top:470px;width:12px;height:1.4px;background:#0d1220;"></div><div class="t" style="left:1558.7px;top:506px;font-size:14.5px;line-height:16px;font-weight:400;color:#94a5bd;transform:scaleX(1.0147);transform-origin:0 0;">Источник</div><div class="t" style="left:1702.6px;top:506px;font-size:14.5px;line-height:16px;font-weight:400;color:#0d1220;transform:scaleX(0.9146);transform-origin:0 0;">BIZONE</div><div class="t" style="left:1558.7px;top:552px;font-size:14.5px;line-height:16px;font-weight:400;color:#94a5bd;transform:scaleX(0.9865);transform-origin:0 0;">Статус</div><div class="r" style="left:1702px;top:548px;width:42px;height:23.5px;background:#eff3f8;border-radius:2px;"></div><div class="t" style="left:1710.0px;top:552px;font-size:12.9px;line-height:15px;font-weight:400;color:#1f3cff;transform:scaleX(0.9666);transform-origin:0 0;">New</div><div class="t" style="left:1558.7px;top:600px;font-size:14.5px;line-height:16px;font-weight:400;color:#94a5bd;transform:scaleX(0.9997);transform-origin:0 0;">Теги</div><div class="r" style="left:1702.5px;top:606px;width:12px;height:1.4px;background:#0d1220;"></div><div class="t" style="left:1558.7px;top:630px;font-size:14.5px;line-height:16px;font-weight:400;color:#94a5bd;transform:scaleX(1.0187);transform-origin:0 0;">Клиентские теги</div><div class="r" style="left:1702.5px;top:636px;width:12px;height:1.4px;background:#0d1220;"></div><div class="t" style="left:1558.7px;top:676px;font-size:14.5px;line-height:16px;font-weight:400;color:#94a5bd;transform:scaleX(0.9932);transform-origin:0 0;">Видимость</div><svg class="r" style="left:1703.8px;top:676.5px;" width="20" height="14" viewBox="0 0 20 14"><path d="M1 7c2.2-3.7 5.3-5.6 9-5.6s6.8 1.9 9 5.6c-2.2 3.7-5.3 5.6-9 5.6S3.2 10.7 1 7z" fill="none" stroke="#5a6a82" stroke-width="1.7"/><circle cx="10" cy="7" r="2.8" fill="#5a6a82"/></svg><div class="t" style="left:1730.0px;top:676px;font-size:14.5px;line-height:16px;font-weight:400;color:#2a66da;transform:scaleX(0.9843);transform-origin:0 0;">Разрешена</div><div class="r" style="left:1730px;top:693.5px;width:75px;height:1px;background:repeating-linear-gradient(90deg,#2a66da 0 3px,transparent 3px 5px);"></div><div class="t" style="left:1558.7px;top:722px;font-size:14.5px;line-height:16px;font-weight:400;color:#94a5bd;transform:scaleX(0.9773);transform-origin:0 0;">Детали</div><div class="r" style="left:1702.5px;top:730px;width:12px;height:1.4px;background:#0d1220;"></div><div class="t" style="left:1558.7px;top:766px;font-size:14.5px;line-height:16px;font-weight:400;color:#94a5bd;transform:scaleX(1.0072);transform-origin:0 0;">Ресурс</div><div class="r" style="left:1702px;top:762px;width:47.5px;height:23.5px;background:#e3e8f0;border-radius:3px;"></div><svg class="r" style="left:1707px;top:767px;" width="13.6" height="13.6" viewBox="0 0 20 20"><rect x="0" y="0" width="20" height="20" rx="3.5" fill="#f7960c"/><circle cx="10" cy="6.5" r="3.1" fill="none" stroke="#fff" stroke-width="2.2"/><path d="M5.6 11.4c2.8 1.6 6 1.6 8.8 0 M10 12.6l-3.7 4 M10 12.6l3.7 4" fill="none" stroke="#fff" stroke-width="2.3" stroke-linecap="round"/></svg><div class="t" style="left:1726.3px;top:766px;font-size:13.8px;line-height:15px;font-weight:400;color:#0d1220;transform:scaleX(0.8572);transform-origin:0 0;">Ok</div><div class="t" style="left:1558.7px;top:812px;font-size:14.5px;line-height:16px;font-weight:400;color:#94a5bd;transform:scaleX(1.0072);transform-origin:0 0;">Приоритет</div><div class="r" style="left:1702.5px;top:820px;width:12px;height:1.4px;background:#0d1220;"></div><div class="r" style="left:1542px;top:857px;width:359px;height:1px;background:#e1e7ef;"></div><svg class="r" style="left:1634px;top:876px;" width="22" height="20" viewBox="0 0 22 20"><path d="M11 1.3L20.5 18.7H1.5z" fill="none" stroke="#d8261c" stroke-width="2" stroke-linejoin="round"/><rect x="10" y="7" width="2" height="6.3" fill="#d8261c"/><rect x="10" y="14.6" width="2" height="2" fill="#d8261c"/></svg><div class="t" style="left:1665.8px;top:878px;font-size:14.4px;line-height:16px;font-weight:400;color:#0d1220;-webkit-text-stroke:0.3px #0d1220;transform:scaleX(0.9620);transform-origin:0 0;">НАРУШЕНИЕ</div><div class="r" style="left:1796.2px;top:877px;width:3.8px;height:3.8px;background:#5f6f88;border-radius:50%;"></div><div class="r" style="left:1796.2px;top:884px;width:3.8px;height:3.8px;background:#5f6f88;border-radius:50%;"></div><div class="r" style="left:1796.2px;top:891px;width:3.8px;height:3.8px;background:#5f6f88;border-radius:50%;"></div><svg class="r" style="left:1908px;top:920px" width="12" height="12" viewBox="0 0 12 12"><path d="M12 0v12H0A12 12 0 0 0 12 0z" fill="#000"/></svg><svg class="r" style="left:0px;top:920px" width="12" height="12" viewBox="0 0 12 12"><path d="M0 0v12H12A12 12 0 0 1 0 0z" fill="#000"/></svg>
</body></html>
